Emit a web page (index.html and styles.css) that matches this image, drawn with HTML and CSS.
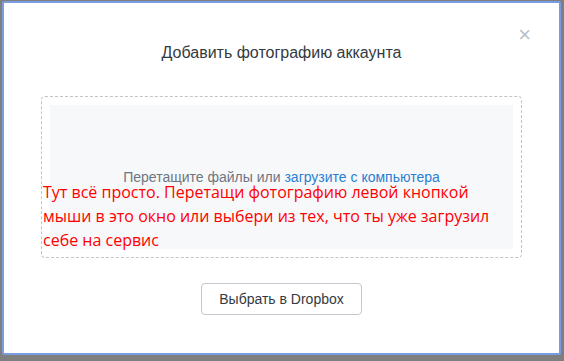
FILE: index.html
```html
<!DOCTYPE html>
<html lang="ru">
<head>
  <meta charset="UTF-8" />
  <title>Добавить фотографию аккаунта</title>
  <link rel="stylesheet" href="styles.css">
</head>
<body>

  <div class="window">
    <div class="modal">
      <button class="close-btn" title="Закрыть">&times;</button>
      <h1>Добавить фотографию аккаунта</h1>

      <div class="dropzone">
        <div class="drop-area">
          <p>Перетащите файлы или <a href="#">загрузите с компьютера</a></p>
        </div>
      </div>

      <div class="actions">
        <button class="dropbox-btn">Выбрать в Dropbox</button>
      </div>

      <div class="note">
        <span>Тут всё просто. Перетащи фотографию левой кнопкой</span>
        <span>мыши в это окно или выбери из тех, что ты уже загрузил</span>
        <span>себе на сервис</span>
      </div>
    </div>
  </div>

</body>
</html>
```

FILE: styles.css
```css
body {
  margin: 0;
  background: #7f7f7f;
  font-family: 'Liberation Sans', Arial, sans-serif;
  color: #333;
}
.window {
  padding: 1px 3px 6px 2px;
}
.modal {
  position: relative;
  height: 354px;
  background: #fff;
  border: 2px solid #7b9be0;
  border-radius: 2px;
  box-sizing: border-box;
  padding-top: 40px;
}
h1 {
  margin: 0 0 33px;
  text-align: center;
  font-size: 16px;
  font-weight: normal;
  line-height: 20px;
  color: #333a42;
}
.close-btn {
  position: absolute;
  top: 22px;
  right: 28px;
  background: none;
  border: none;
  padding: 0;
  font-size: 22px;
  line-height: 20px;
  color: #b9c0c8;
  cursor: pointer;
}
.dropzone {
  margin: 0 37px;
  padding: 8px;
  border: 1px dashed #c4c4c4;
  border-radius: 4px;
}
.drop-area {
  height: 144px;
  background: #f7f8fa;
  display: flex;
  align-items: center;
  justify-content: center;
}
.drop-area p {
  margin: 0;
  font-size: 14px;
  line-height: 12px;
  color: #6d7680;
}
.drop-area a {
  color: #2a7fd4;
  text-decoration: none;
}
.actions {
  display: flex;
  justify-content: center;
  margin-top: 25px;
}
.dropbox-btn {
  width: 161px;
  height: 32px;
  background: #fff;
  border: 1px solid #c3c8cf;
  border-radius: 4px;
  font-family: 'Liberation Sans', Arial, sans-serif;
  font-size: 14px;
  color: #333a42;
  cursor: pointer;
}
.note {
  position: absolute;
  left: 39px;
  top: 181px;
  display: flex;
  flex-direction: column;
  gap: 8px;
  font-family: 'Open Sans', 'Noto Sans', sans-serif;
  font-size: 16px;
  line-height: 16px;
  color: #ff0000;
}
```
